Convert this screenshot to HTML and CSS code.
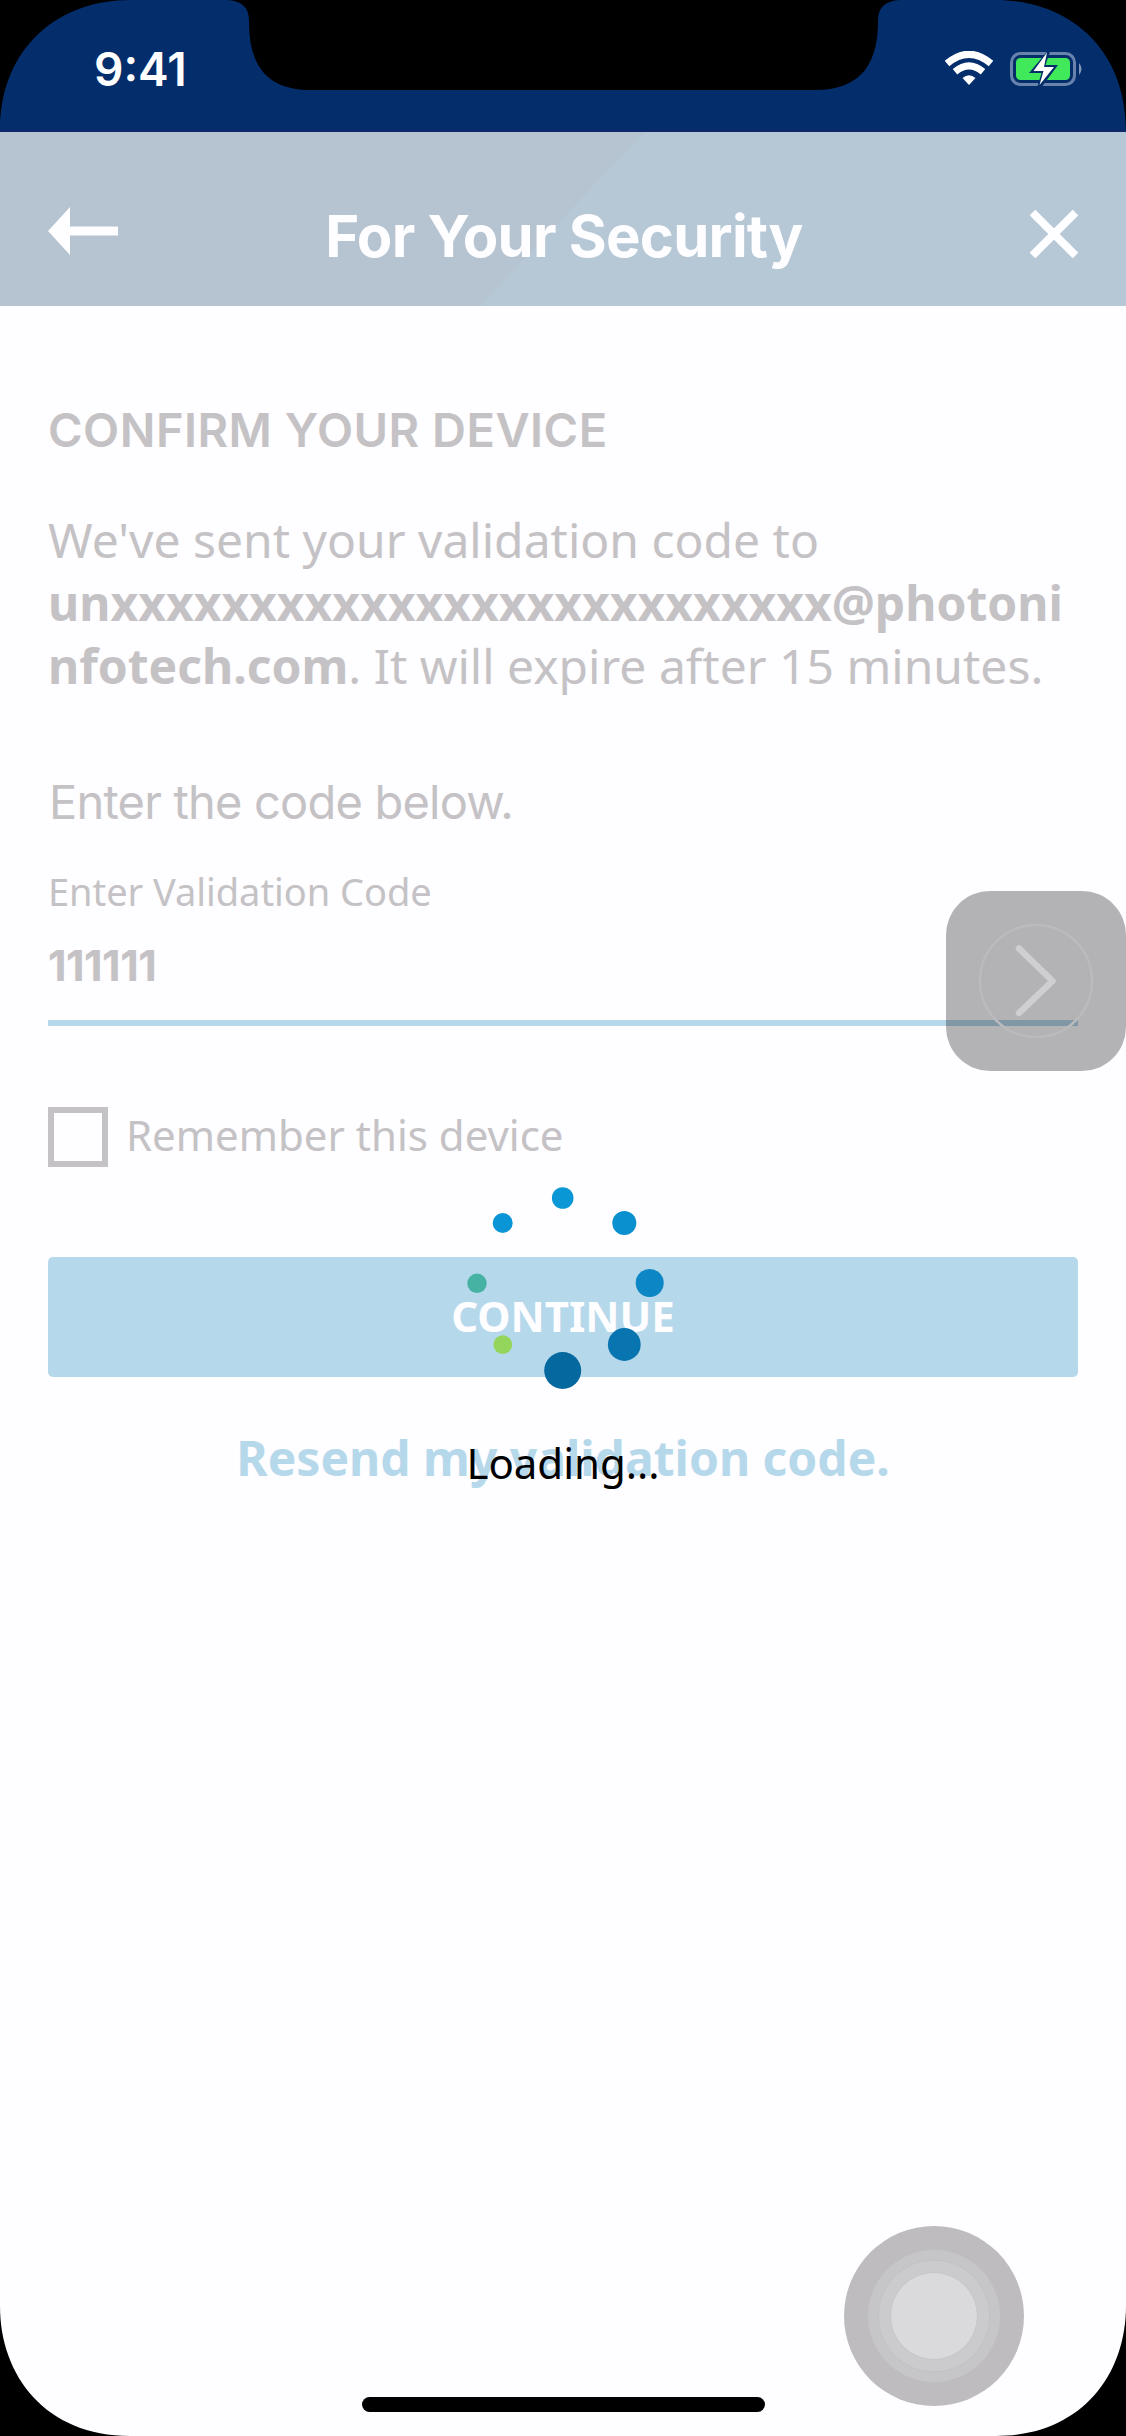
FILE: index.html
```html
<!DOCTYPE html>
<html lang="en">
<head>
<meta charset="utf-8">
<title>For Your Security</title>
<link rel="stylesheet" href="styles.css">
</head>
<body>
<div class="screen">
  <div class="status">
    <span class="time">9:41</span>
    <svg class="status-icons" width="140" height="36" viewBox="0 0 140 36">
      <g fill="none" stroke="#fff" stroke-width="7">
        <path d="M4 12.500Q26 -6 48 12.500"/>
        <path d="M12 20.800Q26 9 40 20.800"/>
      </g>
      <path d="M19.500 27Q26 21.500 32.500 27L26 34Z" fill="#fff"/>
      <rect x="68.500" y="2.500" width="63" height="31" rx="9" fill="none" stroke="#6983ad" stroke-width="3"/>
      <rect x="73" y="7" width="54" height="22" rx="4.500" fill="#3fe959"/>
      <path d="M136 12Q141 18 136 24Z" fill="#8297b9"/>
      <path d="M105.500 -1L86 22h12.500L94 37h4L115 14h-12.500L107.500 -1Z" fill="#042e6b"/>
      <path d="M104 1.500L90.500 20h10L96.500 34L111 16h-10Z" fill="#fff"/>
    </svg>
  </div>
  <header class="header">
    <svg width="70" height="48" viewBox="0 0 70 48"><path d="M0 24L22 0V19.500H70V28.500H22V48Z" fill="#fefdff"/></svg>
    <h1 class="title">For Your Security</h1>
    <svg class="close" width="48" height="48" viewBox="0 0 48 48"><path d="M2.500 2.500L45.500 45.500M45.500 2.500L2.500 45.500" stroke="#fefdff" stroke-width="8"/></svg>
  </header>
  <main class="main">
    <h2 class="heading">CONFIRM YOUR DEVICE</h2>
    <p class="message">We've sent your validation code to<br><strong>unxxxxxxxxxxxxxxxxxxxxxxxxxx@photoni</strong><br><strong>nfotech.com</strong>. It will expire after 15 minutes.</p>
    <p class="prompt">Enter the code below.</p>
    <div class="field">
      <div class="label">Enter Validation Code</div>
      <div class="value">111111</div>
    </div>
    <div class="remember"><span class="box"></span><span class="remember-text">Remember this device</span></div>
    <div class="button">CONTINUE</div>
    <div class="resend">Resend my validation code.</div>
  </main>

  <svg class="spinner" width="210" height="210" viewBox="463 1184 210 210">
    <circle cx="562.700" cy="1198" r="10.800" fill="#0a97d5"/>
    <circle cx="624.300" cy="1223" r="12" fill="#0b90cf"/>
    <circle cx="649.700" cy="1283" r="14" fill="#0c86c5"/>
    <circle cx="624.300" cy="1344.500" r="16.400" fill="#0874b0"/>
    <circle cx="562.700" cy="1370.500" r="18.500" fill="#05689f"/>
    <circle cx="502.800" cy="1344.700" r="9.400" fill="#94d65b"/>
    <circle cx="477" cy="1283.300" r="9.700" fill="#46b2a4"/>
    <circle cx="502.700" cy="1223" r="10" fill="#0a96d6"/>
  </svg>
  <div class="loading">Loading...</div>

  <svg class="side-tab" width="180" height="180" viewBox="0 0 180 180">
    <rect width="180" height="180" rx="44" fill="#000" fill-opacity=".295"/>
    <circle cx="90" cy="90" r="56" fill="none" stroke="#bbbabd" stroke-width="2.500"/>
    <path d="M73 57.500L106.500 90L73 122" fill="none" stroke="#cfced1" stroke-width="6.500" stroke-linecap="round" stroke-linejoin="round"/>
  </svg>

  <svg class="assist" width="180" height="180" viewBox="0 0 180 180">
    <circle cx="90" cy="90" r="90" fill="#bebcbf"/>
    <circle cx="90" cy="90" r="66" fill="#c6c5c8"/>
    <circle cx="90" cy="90" r="56" fill="#cbcacd" stroke="#c1c0c3"/>
    <circle cx="90" cy="90" r="43.500" fill="#dad9dc" stroke="#c6c5c8"/>
  </svg>
  <div class="home-bar"></div>

  <svg class="bezel" width="1126" height="2436" viewBox="0 0 1126 2436">
    <path d="M0 0H130C60 0 0 46 0 131ZM1126 0H996C1066 0 1126 46 1126 131ZM0 2306C0 2376 46 2436 130 2436H0ZM1126 2306C1126 2376 1080 2436 996 2436H1126Z"/>
    <path d="M227 0C242 1 249 7 249 21C249 60 262 90 311 90H815C864 90 878 60 878 21C878 7 885 1 900 0Z"/>
  </svg>
</div>
</body>
</html>
```
FILE: styles.css
```css
* { box-sizing: border-box; }
body { margin: 0; background: #000; }
h1, h2, p { margin: 0; }
.screen {
  position: relative;
  width: 1126px;
  height: 2436px;
  overflow: hidden;
  background: #fefdff;
  color: #c4c2c5;
  font-family: "Noto Sans", sans-serif;
}
.status {
  display: flex;
  justify-content: space-between;
  height: 132px;
  padding: 51px 42px 0 94px;
  background: #042e6b;
  border-bottom: 2px solid #10266b;
}
.time {
  font: 600 46px/36px Inter, sans-serif;
  color: #fff;
}
.status-icons { margin-right: 1px; }
.header {
  display: flex;
  justify-content: space-between;
  height: 174px;
  padding: 34px 48px 0;
  background: linear-gradient(133.500deg, #b6c3d0 49.800%, #b6c7d5 50%);
}
.header svg { margin-top: 41px; }
.header .close { margin-top: 44px; }
.title {
  font: 700 58px/140px Inter, sans-serif;
  letter-spacing: -0.75px;
  margin-left: -20px;
  color: #fefdff;
  white-space: nowrap;
}
.main { padding: 92px 48px 0; }
.heading { font: 600 47px/64px Inter, sans-serif; letter-spacing: 0.48px; white-space: nowrap; }
.message { margin-top: 46px; font-size: 48px; line-height: 63px; white-space: nowrap; }
.prompt { margin-top: 73px; padding-left: 1px; font: 400 47px/64px Inter, sans-serif; letter-spacing: -0.8px; }
.field { margin-top: 31px; padding-bottom: 25px; border-bottom: 6px solid #b6d8eb; }
.label { font-size: 38px; line-height: 52px; letter-spacing: -0.05px; }
.value { margin-top: 18px; font: 700 43px/60px Inter, sans-serif; letter-spacing: -0.5px; }
.remember { display: flex; align-items: flex-start; gap: 18px; margin-top: 81px; height: 60px; }
.box { width: 60px; height: 60px; border: 6px solid #c4c2c5; }
.remember-text { font-size: 42px; line-height: 56px; }
.button {
  height: 120px;
  margin-top: 90px;
  border-radius: 5px;
  background: #b6d8eb;
  color: #fefdff;
  font-size: 42px;
  font-weight: 700;
  line-height: 118px;
  text-align: center;
}
.resend {
  margin-top: 49px;
  color: #b6d8eb;
  font-size: 48px;
  font-weight: 700;
  line-height: 64px;
  text-align: center;
}
.spinner { position: absolute; left: 463px; top: 1184px; }
.loading {
  position: absolute;
  left: 0;
  right: 0;
  top: 1435px;
  color: #000;
  font-size: 42px;
  line-height: 56px;
  text-align: center;
}
.side-tab { position: absolute; left: 946px; top: 891px; }
.assist { position: absolute; left: 844px; top: 2226px; }
.home-bar {
  position: absolute;
  left: 362px;
  top: 2397px;
  width: 403px;
  height: 15px;
  border-radius: 8px;
  background: #000;
}
.bezel { position: absolute; left: 0; top: 0; pointer-events: none; }
```
